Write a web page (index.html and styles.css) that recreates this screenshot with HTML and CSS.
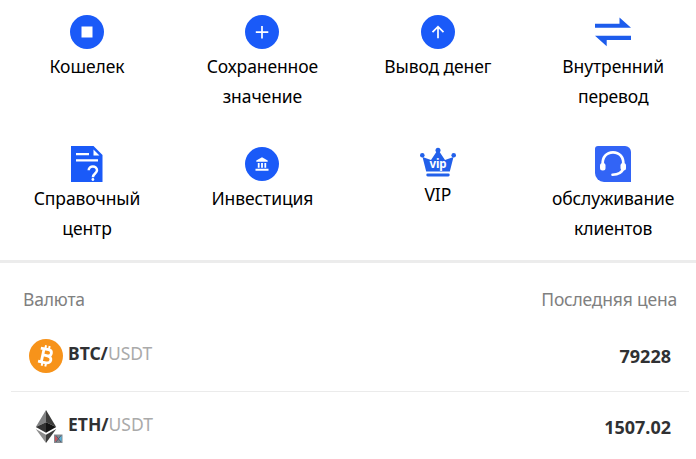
FILE: index.html
```html
<!DOCTYPE html>
<html lang="ru">
<head>
<meta charset="UTF-8">
<meta name="viewport" content="width=device-width, initial-scale=1.0">
<title>Кошелек</title>
<link rel="stylesheet" href="styles.css">
</head>
<body>

<div class="menu">
  <div class="menu-item">
    <svg class="icon" viewBox="0 0 36 36">
      <circle cx="18" cy="18" r="17"/>
      <rect class="white" x="12.5" y="12.5" width="11" height="11"/>
    </svg>
    <span>Кошелек</span>
  </div>
  <div class="menu-item">
    <svg class="icon" viewBox="0 0 36 36">
      <circle cx="18" cy="18" r="17"/>
      <path class="line" d="M18 12v12.500M11.800 18.200h12.500"/>
    </svg>
    <span>Сохраненное<br>значение</span>
  </div>
  <div class="menu-item">
    <svg class="icon" viewBox="0 0 36 36">
      <circle cx="18" cy="18" r="17"/>
      <path class="line" d="M18 24.300v-12M12.500 18.200l5.500-5.600 5.500 5.600"/>
    </svg>
    <span>Вывод денег</span>
  </div>
  <div class="menu-item">
    <svg class="icon icon-transfer" viewBox="0 0 36 36">
      <path d="M0 9.700h24.500V3.500L36 13.800H0zM36 21.800H0l11.700 10.400V26H36z"/>
    </svg>
    <span>Внутренний<br>перевод</span>
  </div>

  <div class="menu-item">
    <svg class="icon" viewBox="0 0 36 36">
      <path d="M2 0h22.500l9 9v27H2z"/>
      <path class="white" d="M24.500 3.500v6h6zM7 7h13v2.200H7zM7 13.200h22v2.300H7z"/>
      <path class="line q" d="M19.700 24.300c0-5 8.300-5 8.300 0 0 3.200-4.100 3.200-4.100 7"/>
      <circle class="white" cx="23.900" cy="33.500" r="1.400"/>
    </svg>
    <span>Справочный<br>центр</span>
  </div>
  <div class="menu-item">
    <svg class="icon" viewBox="0 0 36 36">
      <circle cx="18" cy="18" r="17"/>
      <path class="white" d="M18 11.300l5.700 3.200v1.300H12.300v-1.300zM13.800 17h1.800v4.800h-1.800zM17.100 17h1.800v4.800h-1.800zM20.400 17h1.800v4.800h-1.800zM11.500 22.700h13v2h-13z"/>
    </svg>
    <span>Инвестиция</span>
  </div>
  <div class="menu-item">
    <svg class="icon icon-vip" viewBox="0 0 36 32">
      <path d="M2.500 11l8.500 3 7-10.500 7 10.500 8.500-3-3.700 14.500H6.200z"/>
      <circle cx="2.300" cy="9.300" r="2.300"/>
      <circle cx="18" cy="4.300" r="2.500"/>
      <circle cx="33.700" cy="9.300" r="2.300"/>
      <rect x="6.300" y="27.500" width="23.400" height="3" rx="1.400"/>
      <text class="vip" x="18" y="21.700">vip</text>
    </svg>
    <span>VIP</span>
  </div>
  <div class="menu-item">
    <svg class="icon icon-service" viewBox="0 0 36 36">
      <path d="M3 0h27a6 6 0 0 1 6 6v30H9A9 9 0 0 1 0 27V3a3 3 0 0 1 3-3z"/>
      <path class="line headset" d="M7.800 19c-1-8 4-12.700 10.200-12.700S29.200 11 28.200 19"/>
      <path class="line cable" d="M28.500 22.500c-1.500 4-5 6-11 6.300"/>
      <rect class="white" x="5" y="17" width="5.500" height="7.500" rx="2.500"/>
      <rect class="white" x="25.500" y="17" width="5.500" height="7.500" rx="2.500"/>
    </svg>
    <span>обслуживание<br>клиентов</span>
  </div>
</div>

<div class="market">
  <div class="market-head">
    <span>Валюта</span>
    <span>Последняя цена</span>
  </div>

  <div class="coin">
    <svg class="coin-icon" viewBox="0 0 34 34">
      <circle class="orange" cx="17" cy="17" r="17"/>
      <g class="btc" transform="rotate(12 17 17)">
        <path d="M13.600 10.300v13.400M10.300 10.300h8c4.500 0 4.500 6.200 0 6.200h-5M18.300 16.500c5.700 0 5.700 7.200 0 7.200h-8"/>
        <path class="ticks" d="M14.800 6.500v3.500M18.500 6.500v3.500M14.800 23.500v4M18.500 23.500v4"/>
      </g>
    </svg>
    <div class="pair"><b>BTC/</b><span>USDT</span></div>
    <div class="price">79228</div>
  </div>

  <div class="coin">
    <svg class="coin-icon" viewBox="0 0 34 34">
      <path fill="#828384" d="M17 0L6.800 17 17 12.300z"/>
      <path fill="#3c3c3b" d="M17 0l10.200 17L17 12.300z"/>
      <path fill="#343434" d="M17 12.300L6.800 17 17 22.800z"/>
      <path fill="#141414" d="M17 12.300L27.200 17 17 22.800z"/>
      <path fill="#8c8c8c" d="M6.800 19L17 24.800V33z"/>
      <path fill="#3c3c3b" d="M27.200 19L17 24.800V33z"/>
      <rect fill="#858b90" x="25" y="24.500" width="8.500" height="8.500"/>
      <path fill="#c9545b" d="M26 25.500l3 3.300-3 3.200z"/>
      <path fill="#55b5df" d="M32.500 25.500l-3 3.300 3 3.200z"/>
      <path stroke="#4a5066" stroke-width=".8" d="M27 25.500l5 6.500M32 25.500L27 32"/>
    </svg>
    <div class="pair"><b>ETH/</b><span>USDT</span></div>
    <div class="price">1507.02</div>
  </div>
</div>

</body>
</html>
```
FILE: styles.css
```css
body {
  margin: 0;
  background: #fff;
  font-family: "Noto Sans", "Open Sans", sans-serif;
  font-size: 17.5px;
  color: #000;
}

/* top menu */
.menu {
  display: grid;
  grid-template-columns: repeat(4, 165px);
  grid-template-rows: 132px 114px;
  column-gap: 10.4px;
  padding: 14px 0 0 4.5px;
  border-bottom: 3px solid #ececec;
}
.menu-item {
  display: flex;
  flex-direction: column;
  align-items: center;
  line-height: 30px;
  letter-spacing: -0.1px;
  text-align: center;
  white-space: nowrap;
}
.menu-item span {
  padding-top: 1px;
}
.icon {
  width: 36px;
  height: 36px;
  fill: #1a5af8;
}
.icon-transfer {
  fill: #1d5cec;
}
.icon-vip {
  height: 32px;
  fill: #2260ea;
}
.icon-service {
  fill: #3264f6;
}
.white {
  fill: #fff;
}
.line {
  fill: none;
  stroke: #fff;
  stroke-width: 1.7;
}
.q {
  stroke-width: 2.5;
}
.headset {
  stroke-width: 2.7;
}
.cable {
  stroke-width: 2.6;
  stroke-linecap: round;
}
.vip {
  fill: #fff;
  font-size: 11.5px;
  font-weight: bold;
  text-anchor: middle;
}

/* price list */
.market-head {
  display: flex;
  justify-content: space-between;
  padding: 0 19px 0 23px;
  height: 58px;
  line-height: 72px;
  letter-spacing: -0.2px;
  color: #808080;
}
.coin {
  display: flex;
  align-items: center;
  height: 70px;
  margin: 0 7px 0 11px;
  padding: 0 18px;
  border-bottom: 1px solid #ebebeb;
}
.coin:last-child {
  border-bottom: none;
}
.coin-icon {
  width: 34px;
  height: 34px;
  margin-right: 5px;
}
.orange {
  fill: #f7931a;
}
.btc {
  fill: none;
  stroke: #fff;
  stroke-width: 2.8;
}
.ticks {
  stroke-width: 2;
}
.pair {
  flex: 1;
  padding-bottom: 6px;
  color: #aaa;
}
.pair b {
  color: #303133;
}
.price {
  font-size: 18px;
  font-weight: bold;
  color: #303133;
}
```
